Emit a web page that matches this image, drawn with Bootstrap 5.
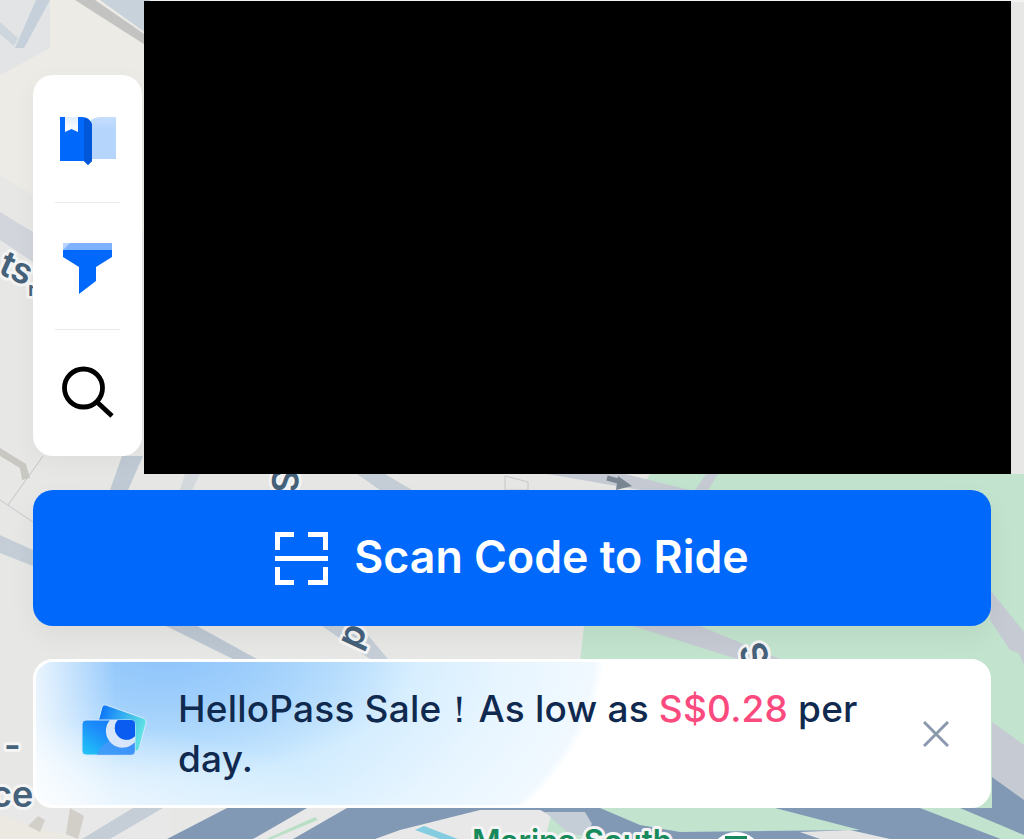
<!DOCTYPE html>
<html lang="en">
<head>
<meta charset="utf-8">
<title>Scan Code to Ride</title>
<link href="https://cdn.jsdelivr.net/npm/bootstrap@5.3.0/dist/css/bootstrap.min.css" rel="stylesheet">
<style>
html,body{height:839px;overflow:hidden}
body{position:relative;background:#e8e7e5;font-family:Inter,"Noto Sans",sans-serif;padding:0 33px}
.map-layer{position:absolute;inset:0;width:1024px;height:839px}
.map-label{font-family:Inter,sans-serif;font-weight:600;fill:#46617a;stroke:#f4f4f4;stroke-width:6px;paint-order:stroke;stroke-linejoin:round}
.page-stack{position:relative;width:958px}
.top-zone{height:474px}
.tool-rail{width:109px;height:381px;margin-top:75px;padding-top:1px;border-radius:20px;background:#fff;box-shadow:0 6px 24px rgba(0,0,0,.045)}
.tool-cell{flex:1 1 0}
.tool-rule{height:1px;margin:0 22px;background:#e6e9ee}
.mask-block{width:867px;height:473px;margin-top:1px;margin-left:2px;margin-right:-20px;background:#000}
.scan-btn{height:136px;margin-top:16px;border:0;border-radius:20px;background:#0069fb;color:#fff;font-size:44.700px;font-weight:600;gap:26px;box-shadow:0 10px 28px rgba(0,0,0,.05)}
.scan-btn:hover{background:#0069fb;color:#fff}
.promo-bar{height:149px;margin-top:33px;border:3px solid #fff;border-radius:20px;padding:1px 39px 0 45px;overflow:hidden;color:#10294f;font-size:37px;font-weight:500;letter-spacing:.2px;line-height:50px;background:
 linear-gradient(90deg,rgba(255,255,255,.75),rgba(255,255,255,0) 80px),
 radial-gradient(ellipse 300px 85px at 0 146px,rgba(245,250,255,.95),rgba(245,250,255,0)),
 radial-gradient(ellipse 250px 125px at 130px -8px,#8fc4fb 0,rgba(148,200,251,.75) 40%,rgba(170,215,253,0) 100%),
 radial-gradient(ellipse 490px 300px at 80px -20px,#b5defd 0,#cdeafe 50%,#e7f5ff 80%,#f1f9ff 98%,#fff 100%),
 #fff}
.promo-text{margin-left:29px;width:720px}
.promo-price{color:#fb4a7e}
.promo-close{background:none;border:0;padding:0;line-height:0;margin-left:auto}
</style>
</head>
<body>
<svg class="map-layer" viewBox="0 0 1024 839" aria-hidden="true">
  <rect width="1024" height="839" fill="#e7e7e6"/>
  <rect width="1024" height="2" fill="#f2f2f2"/>
  <path d="M0 0H150V230H33V195L0 175V75L50 48Z" fill="#ecebe5"/>
  <path d="M0 0H50V48L0 75Z" fill="#e3e4e6"/>
  <path d="M36 0H50L24 48H15Z" fill="#c5d0da"/>
  <path d="M0 22L18 38L14 46L0 34Z" fill="#ced6dd"/>
  <path d="M75 0H95L150 38V48Z" fill="#c3c3c2"/>
  <path d="M100 0H150V36Z" fill="#c8d2da"/>
  <path d="M0 212L33 232V262L0 240Z" fill="#d2d6dc"/>
  <path d="M0 448L26 464L30 478L22 480L20 468L0 456Z" fill="#c9c7c2"/>
  <path d="M43 456L8 505M0 500L33 522" stroke="#c3c5c8" fill="none"/>
  <path d="M0 535L33 550V566L0 553Z" fill="#c5ced6"/>
  <path d="M122 456H143L128 490H110Z" fill="#bfcad4"/>
  <path d="M185 474H200L192 490H180Z" fill="#d4d9dd"/>
  <path d="M650 474H1024V839H560L584 626L640 490Z" fill="#c2e3ce"/>
  <path d="M357 474H385L412 490H380Z" fill="#c5ced6"/>
  <path d="M505 476L528 482V490H505Z" fill="none" stroke="#c4c6c8"/>
  <path d="M547 474H625L690 490H640Z" fill="#c5cad3"/>
  <path d="M695 490L706 474H718L708 490Z" fill="#c5cad3"/>
  <path d="M166 626H197L257 659H233Z" fill="#bcc7d2"/>
  <path d="M322 626H360L388 659H370Z" fill="#c5ced6"/>
  <path d="M633 626H700L780 659H737Z" fill="#c5cad3"/>
  <path d="M990 590L1024 632V655L1010 650L990 620Z" fill="#c5cad3"/>
  <path d="M1013 640L1024 665V640Z" fill="#c5cad3"/>
  <path d="M992 722L1024 745V800L992 777Z" fill="#c5cad3"/>
  <path d="M992 777L1024 800V839H780L760 808H992Z" fill="#8299b6"/>
  <path d="M0 808H170V839H0Z" fill="#e8e8e8"/>
  <path d="M0 815L30 825L80 839H0Z" fill="#ece9e3"/>
  <path d="M38 816L45 820L40 832L28 826Z" fill="#d2cfc9"/>
  <path d="M70 808L84 816L78 839L66 834Z" fill="#d2cfc9"/>
  <path d="M133 808H163L110 839H82Z" fill="#c5ced6"/>
  <path d="M227 808H1024V839H167Z" fill="#8299b6"/>
  <path d="M307 808H347L293 839H253Z" fill="#e8e8e8"/>
  <path d="M266 839L315 817L318 820L272 839Z" fill="#b9e0c7"/>
  <path d="M375 839L400 830L480 810H540L600 839Z" fill="#e8e8e8"/>
  <path d="M415 830L424 826L458 839H440Z" fill="#84cde0"/>
  <path d="M545 839L552 812L590 828L580 839Z" fill="#c2e3ce"/>
  <path d="M545 812H585L592 824L585 835L570 835Z" fill="#c5ced6"/>
  <path d="M600 808H775L860 830L680 832L640 825Z" fill="#c2e3ce"/>
  <path d="M800 832L850 830L890 839H820Z" fill="#e4e4e4"/>
  <path d="M920 808H960L1024 835V848Z" fill="#c2e3ce"/>
  <path d="M607 478L622 482" stroke="#7a8793" stroke-width="5"/>
  <path d="M618 476L632 486L616 490Z" fill="#7a8793"/>
  <g class="map-label" font-size="36">
    <text transform="translate(-3 273) rotate(24)">ts</text>
    <text transform="translate(28 296)" font-size="20">r</text>
    <text transform="translate(273 468) rotate(94)">S</text>
    <text transform="translate(350 622) rotate(115)">d</text>
    <text transform="translate(738 648) rotate(70)">St</text>
    <text x="4" y="758">-</text>
    <text x="-9" y="807">ce</text>
    <text x="472" y="852" font-size="31" style="fill:#178a5b">Marina South</text>
  </g>
  <circle cx="736" cy="859" r="27" fill="#fff"/>
  <path d="M725 836h22v4h-22z" fill="#178a5b"/>
</svg>
<div class="page-stack d-flex flex-column">
  <div class="top-zone d-flex align-items-start">
    <nav class="tool-rail d-flex flex-column flex-shrink-0">
      <div class="tool-cell d-flex align-items-center justify-content-center">
        <svg class="mt-1" width="56" height="48" viewBox="0 0 56 48" aria-label="Guide">
          <defs>
            <linearGradient id="bm" x1="0" y1="0" x2="0" y2="1"><stop offset="0" stop-color="#e3edff"/><stop offset="1" stop-color="#fff"/></linearGradient>
            <linearGradient id="pg" x1="0" y1="0" x2="0" y2="1"><stop offset="0" stop-color="#c6defe"/><stop offset=".3" stop-color="#b5d5fd"/></linearGradient>
          </defs>
          <path d="M31 3C34 1 37 0 40 0H56V42H31Z" fill="url(#pg)"/>
          <path d="M0 0H22C28 0 32 4 32 9V44L28 48L24 44H0V0Z" fill="#0069fb"/>
          <path d="M24 1C29 2 32 5 32 9V44L28 48L24 44Z" fill="#0058d8"/>
          <path d="M5 0H18V15L11.500 12L5 15Z" fill="url(#bm)"/>
        </svg>
      </div>
      <div class="tool-rule"></div>
      <div class="tool-cell d-flex align-items-center justify-content-center">
        <svg class="mt-1" width="49" height="51" viewBox="0 0 49 51" aria-label="Filter">
          <path d="M0 0H49V7H0Z" fill="#7db1fd"/>
          <path d="M0 7L7 0H0Z" fill="#b9d4fe"/>
          <path d="M0 7H49V14L33 24V38L16 51V24L0 14Z" fill="#0069fb"/>
        </svg>
      </div>
      <div class="tool-rule"></div>
      <div class="tool-cell d-flex align-items-center justify-content-center">
        <svg width="54" height="54" viewBox="0 0 54 54" aria-label="Search" fill="none" stroke="#000" stroke-width="4.800">
          <circle cx="22.500" cy="22" r="19"/>
          <path d="M36 36L51 50"/>
        </svg>
      </div>
    </nav>
    <div class="mask-block flex-shrink-0"></div>
  </div>
  <button class="scan-btn btn w-100 d-flex align-items-center justify-content-center" type="button">
    <svg width="53" height="53" viewBox="0 0 53 53" aria-hidden="true" fill="none" stroke="#fff" stroke-width="5">
      <path d="M19 2.500H2.500V18M33 2.500H50.500V18M19 50.500H2.500V35M33 50.500H50.500V35"/>
      <path d="M0 26.500H53"/>
    </svg>
    <span>Scan Code to Ride</span>
  </button>
  <div class="promo-bar d-flex align-items-center">
    <svg class="flex-shrink-0 mb-2" width="68" height="54" viewBox="0 0 68 54" aria-hidden="true">
      <defs>
        <linearGradient id="cb" x1="0" y1="0" x2="1" y2=".3"><stop offset="0" stop-color="#0060fb"/><stop offset=".45" stop-color="#2aa0f5"/><stop offset="1" stop-color="#5fe0e4"/></linearGradient>
        <linearGradient id="cf" x1="0" y1="1" x2="1" y2="0"><stop offset="0" stop-color="#22c8f5"/><stop offset=".5" stop-color="#1c8efb"/><stop offset="1" stop-color="#0a6cf5"/></linearGradient>
      </defs>
      <path d="M21 4Q22 1 25 2L62 15Q66 16 65 20L58 46Q57 49 53 48L14 30Z" fill="url(#cb)" stroke="#d4eafe"/>
      <rect x="1" y="17" width="53" height="35" rx="4" fill="url(#cf)" stroke="#cfe6fe"/>
      <path d="M16 52C20 40 32 34 46 33L54 33V48Q54 52 50 52Z" fill="#4d97f8" opacity=".7"/>
      <path d="M29 17A16 16 0 0 0 54 39V33A11 11 0 0 1 37 17Z" fill="#d8e6fb"/>
      <path d="M37 17H50Q54 17 54 21V33A11 11 0 0 1 37 17Z" fill="#0a5cf0"/>
    </svg>
    <div class="promo-text">HelloPass Sale！As low as <span class="promo-price">S$0.28</span> per day.</div>
    <button class="promo-close flex-shrink-0" type="button" aria-label="Close">
      <svg width="26" height="26" viewBox="0 0 26 26" fill="none" stroke="#8b99ac" stroke-width="3"><path d="M1 1L25 25M25 1L1 25"/></svg>
    </button>
  </div>
</div>
<script src="https://cdn.jsdelivr.net/npm/bootstrap@5.3.0/dist/js/bootstrap.bundle.min.js"></script>
</body>
</html>
